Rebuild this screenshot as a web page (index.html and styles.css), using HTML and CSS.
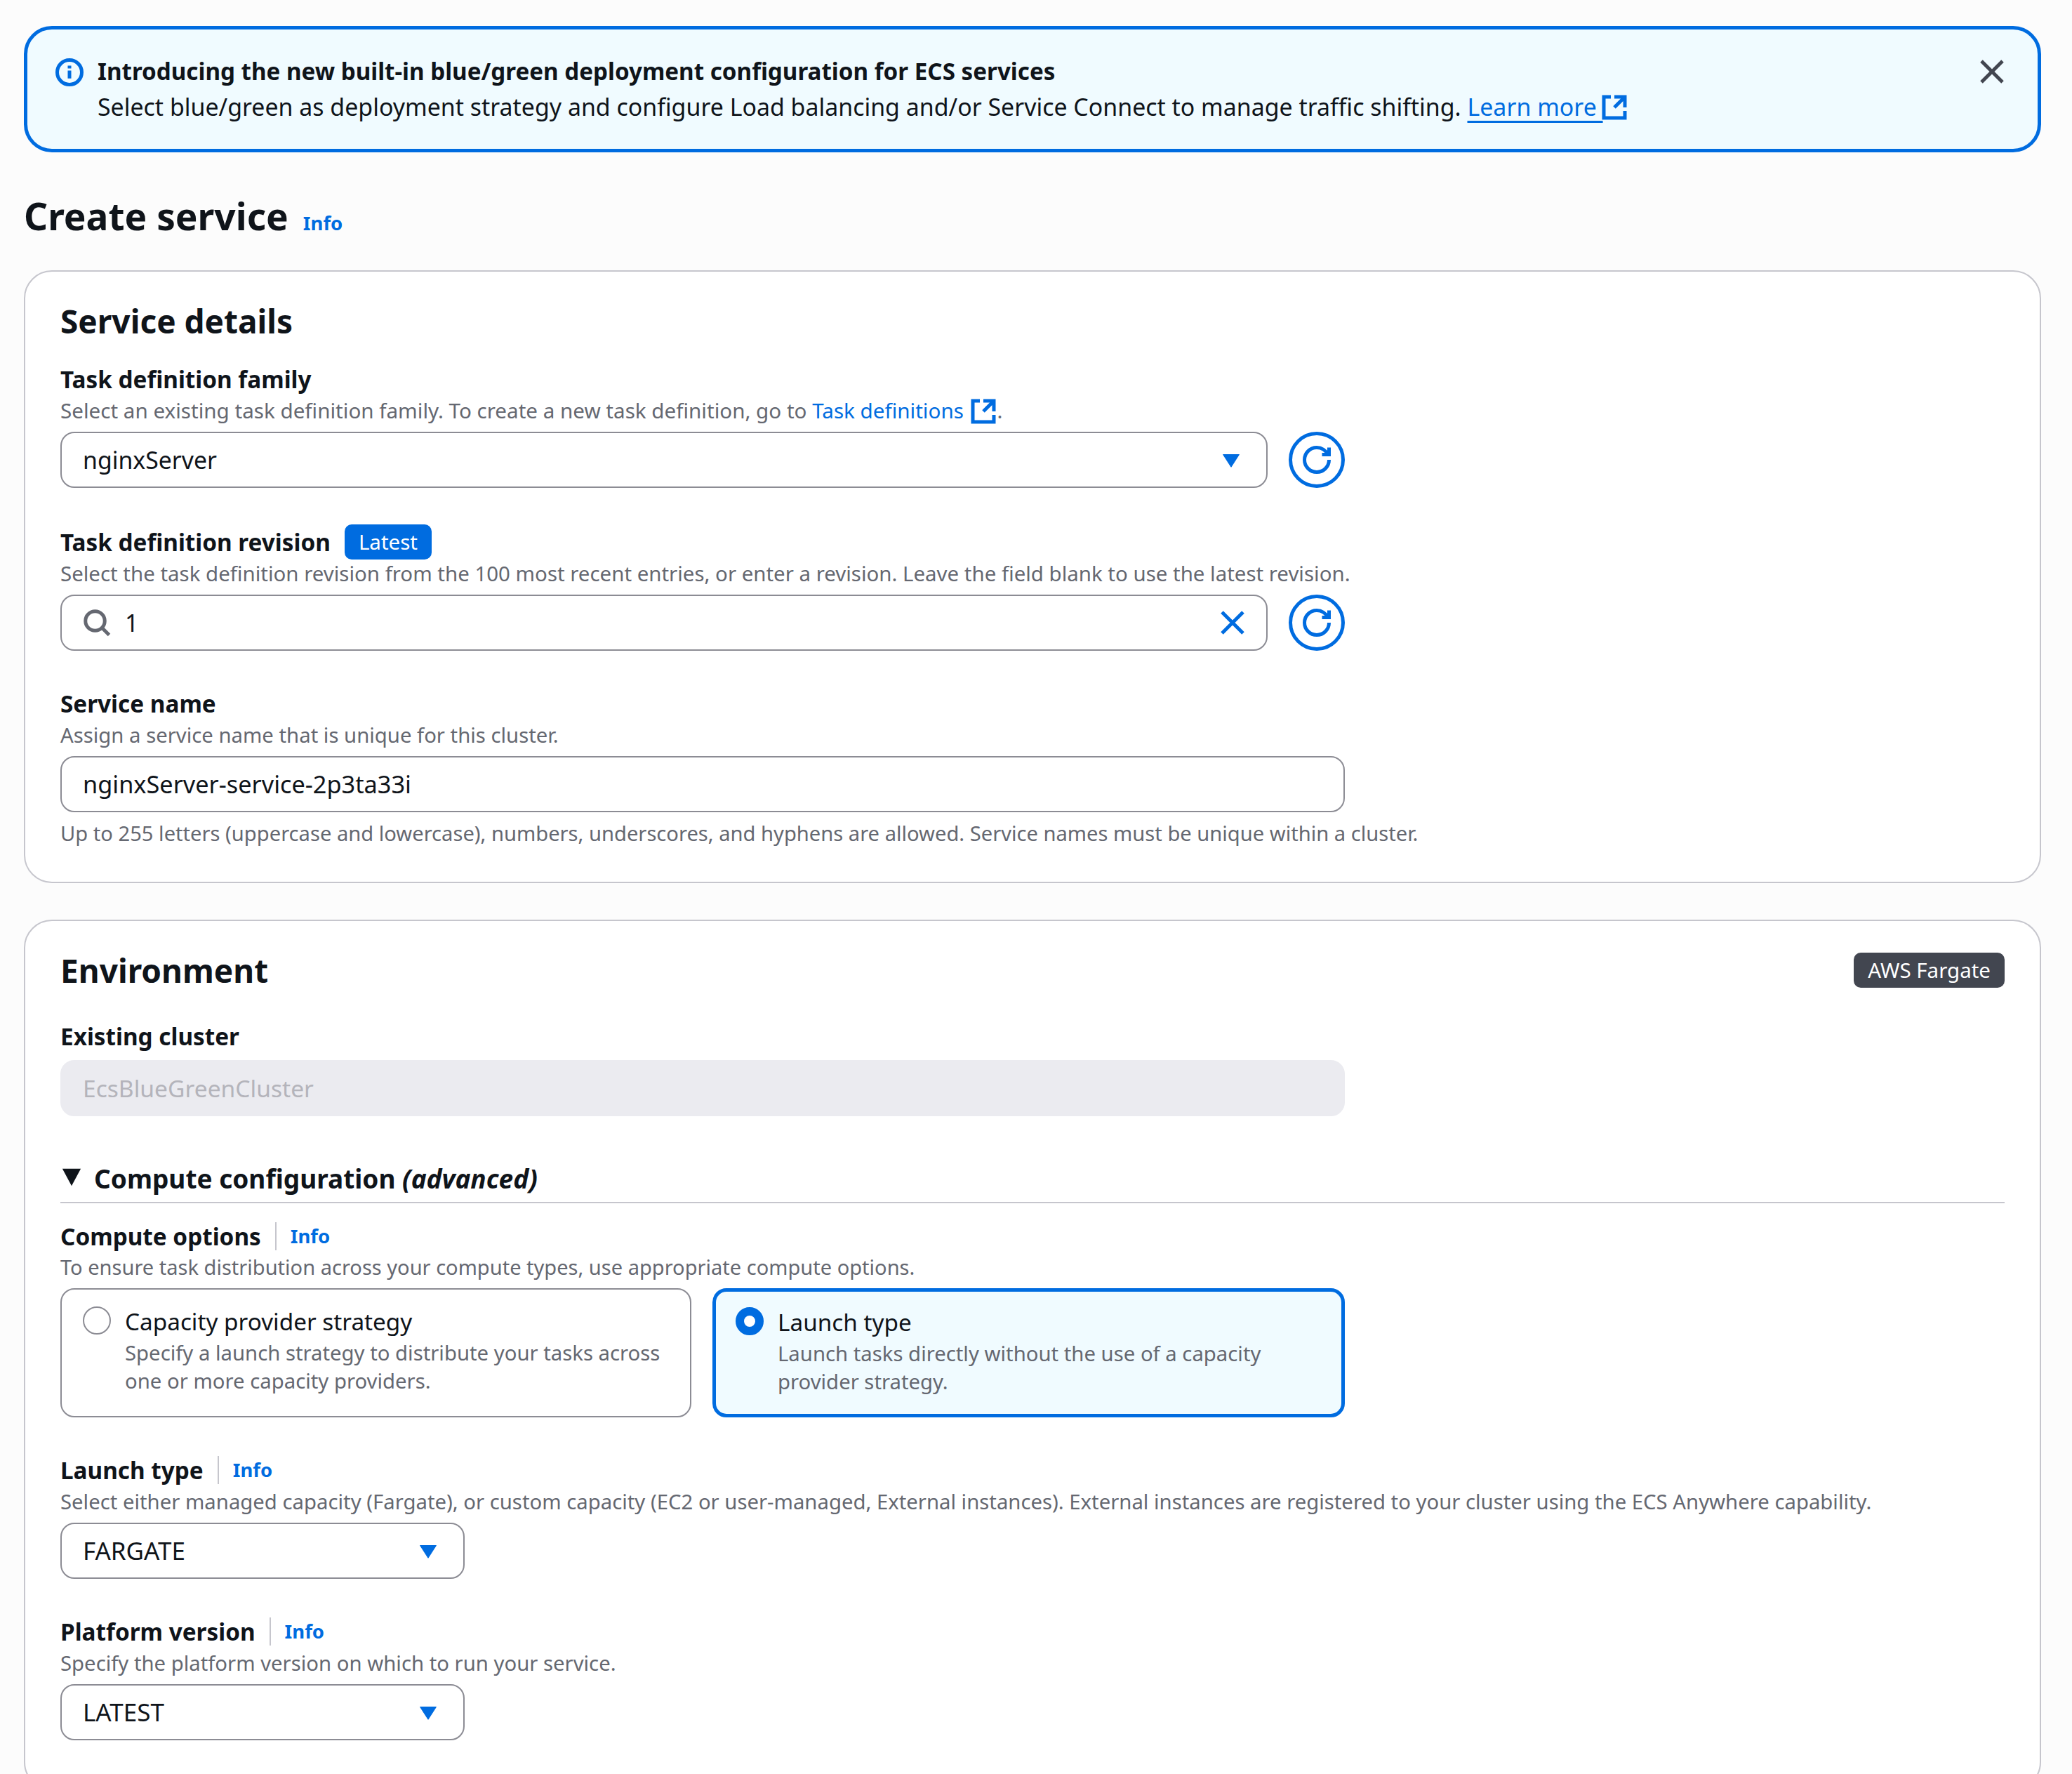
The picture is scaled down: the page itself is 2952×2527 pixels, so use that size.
FILE: index.html
```html
<!DOCTYPE html>
<html lang="en">
<head>
<meta charset="utf-8">
<title>Create service</title>
<link rel="stylesheet" href="styles.css">
</head>
<body>
<main class="page">
  <section class="alert">
    <svg class="icon alert-icon" viewBox="0 0 16 16"><circle cx="8" cy="8" r="7"/><path d="M8 11.5V7M8 4.2v1.6"/></svg>
    <div class="alert-text">
      <div class="alert-title">Introducing the new built-in blue/green deployment configuration for ECS services</div>
      <div>Select blue/green as deployment strategy and configure Load balancing and/or Service Connect to manage traffic shifting. <a class="link underlined">Learn more&nbsp;</a><svg class="icon ext" viewBox="0 0 16 16"><path d="M14 8.01v-6H8M14.02 2 8 8.02M6 2.01H2V14h12v-3.99"/></svg></div>
    </div>
    <svg class="icon alert-close" viewBox="0 0 16 16"><path d="m2 2 12 12M14 2 2 14"/></svg>
  </section>

  <header class="page-head">
    <h1>Create service</h1>
    <a class="link info">Info</a>
  </header>

  <section class="card card-details">
    <h2 class="card-title">Service details</h2>
    <div class="field">
      <div class="label">Task definition family</div>
      <div class="desc desc-family">Select an existing task definition family. To create a new task definition, go to <a class="link">Task definitions</a> <svg class="icon ext" viewBox="0 0 16 16"><path d="M14 8.01v-6H8M14.02 2 8 8.02M6 2.01H2V14h12v-3.99"/></svg>.</div>
      <div class="control-row">
        <div class="input grow">
          <span class="value">nginxServer</span>
          <svg class="caret" viewBox="0 0 16 16"><path d="M3.5 5h9L8 12z"/></svg>
        </div>
        <div class="refresh"><svg class="icon refresh-icon" viewBox="0 0 16 16"><path d="M15 8c0 3.87-3.13 7-7 7s-7-3.13-7-7 3.13-7 7-7c2.79 0 5.2 1.63 6.33 4"/><path d="M15 1v4h-4"/></svg></div>
      </div>
    </div>
    <div class="field field-revision">
      <div class="label-row">
        <span class="label">Task definition revision</span>
        <span class="badge">Latest</span>
      </div>
      <div class="desc desc-wide">Select the task definition revision from the 100 most recent entries, or enter a revision. Leave the field blank to use the latest revision.</div>
      <div class="control-row">
        <div class="input grow">
          <svg class="icon search" viewBox="0 0 16 16"><circle cx="7" cy="7" r="5.5"/><path d="m11 11 4 4"/></svg>
          <span class="value">1</span>
          <svg class="icon clear" viewBox="0 0 16 16"><path d="m2 2 12 12M14 2 2 14"/></svg>
        </div>
        <div class="refresh"><svg class="icon refresh-icon" viewBox="0 0 16 16"><path d="M15 8c0 3.87-3.13 7-7 7s-7-3.13-7-7 3.13-7 7-7c2.79 0 5.2 1.63 6.33 4"/><path d="M15 1v4h-4"/></svg></div>
      </div>
    </div>
    <div class="field field-name">
      <div class="label">Service name</div>
      <div class="desc">Assign a service name that is unique for this cluster.</div>
      <div class="input wide"><span class="value">nginxServer-service-2p3ta33i</span></div>
      <div class="constraint">Up to 255 letters (uppercase and lowercase), numbers, underscores, and hyphens are allowed. Service names must be unique within a cluster.</div>
    </div>
  </section>

  <section class="card card-env">
    <div class="card-head">
      <h2 class="card-title">Environment</h2>
      <span class="badge badge-grey">AWS Fargate</span>
    </div>
    <div class="field field-cluster">
      <div class="label">Existing cluster</div>
      <div class="input wide disabled"><span class="value">EcsBlueGreenCluster</span></div>
    </div>
    <div class="expander">
      <svg class="expander-caret" viewBox="0 0 16 16"><path d="M1 2h14L8 15z"/></svg>
      <h3>Compute configuration <em>(advanced)</em></h3>
    </div>
    <div class="field field-first">
      <div class="label-row">
        <span class="label">Compute options</span>
        <span class="sep"></span>
        <a class="link info-small">Info</a>
      </div>
      <div class="desc desc-narrow">To ensure task distribution across your compute types, use appropriate compute options.</div>
      <div class="tiles">
        <div class="tile">
          <span class="radio"></span>
          <div>
            <div class="tile-title">Capacity provider strategy</div>
            <div class="tile-desc">Specify a launch strategy to distribute your tasks across one or more capacity providers.</div>
          </div>
        </div>
        <div class="tile tile-on">
          <span class="radio radio-on"></span>
          <div>
            <div class="tile-title">Launch type</div>
            <div class="tile-desc">Launch tasks directly without the use of a capacity provider strategy.</div>
          </div>
        </div>
      </div>
    </div>
    <div class="field">
      <div class="label-row">
        <span class="label">Launch type</span>
        <span class="sep"></span>
        <a class="link info-small">Info</a>
      </div>
      <div class="desc">Select either managed capacity (Fargate), or custom capacity (EC2 or user-managed, External instances). External instances are registered to your cluster using the ECS Anywhere capability.</div>
      <div class="input narrow">
        <span class="value">FARGATE</span>
        <svg class="caret" viewBox="0 0 16 16"><path d="M3.5 5h9L8 12z"/></svg>
      </div>
    </div>
    <div class="field">
      <div class="label-row">
        <span class="label">Platform version</span>
        <span class="sep"></span>
        <a class="link info-small">Info</a>
      </div>
      <div class="desc">Specify the platform version on which to run your service.</div>
      <div class="input narrow">
        <span class="value">LATEST</span>
        <svg class="caret" viewBox="0 0 16 16"><path d="M3.5 5h9L8 12z"/></svg>
      </div>
    </div>
  </section>
</main>
</body>
</html>
```
FILE: styles.css
```css
* { box-sizing: border-box; }
html, body { margin: 0; padding: 0; height: 2527px; overflow: hidden; }
body {
  background: #fcfcfc;
  color: #0f141a;
  font-family: "Noto Sans", "Open Sans", sans-serif;
  font-size: 33.3px;
  line-height: 50px;
}
.page { padding: 37px 44px 0 34px; }
a { text-decoration: none; }
.link { color: #006ce0; }
.underlined { text-decoration: underline; text-decoration-thickness: 3px; text-underline-offset: 7px; }
.icon { fill: none; stroke: #006ce0; stroke-width: 2; flex: none; }
.ext { width: 40px; height: 40px; margin: -6px 0 -6px -4px; vertical-align: -2px; }

.alert {
  display: flex;
  align-items: flex-start;
  height: 180px;
  padding: 35px 45px 0 40px;
  background: #f0fbff;
  border: 5px solid #006ce0;
  border-radius: 40px;
}
.alert-icon { width: 40px; height: 40px; margin-top: 6px; margin-right: 20px; }
.alert-text { flex: 1; font-size: 33.9px; }
.alert-title { font-size: 33.2px; font-weight: 700; }
.alert-close { width: 40px; height: 40px; stroke: #424650; margin-top: 5px; }

.page-head { display: flex; align-items: baseline; gap: 21px; margin-top: 56px; height: 70px; line-height: 70px; }
h1 { margin: 0; font-size: 53.2px; font-weight: 700; }
.info { font-size: 27.5px; font-weight: 700; }

.card {
  margin-top: 42px;
  padding: 40px 50px 48px;
  background: #fff;
  border: 2.5px solid #c6c6cd;
  border-radius: 40px;
  height: 873px;
}
.card-env { margin-top: 52px; height: 1240px; }
.card-title { margin: 0; font-size: 46px; font-weight: 700; line-height: 60px; }
.card-head { display: flex; justify-content: space-between; align-items: center; }

.field { margin-top: 28px; }
.field + .field { margin-top: 50px; }
.card-details .field-revision { margin-top: 52px; }
.card-details .field-name { margin-top: 50px; }
.field-cluster { margin-top: 39px; }
.label { font-weight: 700; }
.label-row { display: flex; align-items: center; height: 50px; }
.desc { font-size: 29.3px; line-height: 40px; color: #656871; }
.desc-family { font-size: 29.6px; }
.desc-wide { font-size: 29.45px; }
.desc-narrow { font-size: 29.05px; }
.desc .ext { margin-left: 0; vertical-align: -4px; }
.constraint { margin-top: 10px; font-size: 29.15px; line-height: 40px; color: #656871; }
.control-row { display: flex; gap: 30px; width: 1830px; margin-top: 10px; }
.grow { flex: 1; }
.input {
  display: flex;
  align-items: center;
  height: 80px;
  margin-top: 10px;
  padding: 0 30px;
  background: #fff;
  border: 2.5px solid #8c8c94;
  border-radius: 20px;
  font-size: 34.3px;
}
.control-row .input { margin-top: 0; font-size: 33.8px; }
.value { flex: 1; }
.wide { width: 1830px; }
.narrow { width: 576px; font-size: 35px; }
.input.disabled { background: #ebebf0; border-color: #ebebf0; color: #b4b4bb; font-size: 33.6px; margin-top: 9px; }
.caret { width: 40px; height: 40px; fill: #006ce0; stroke: #006ce0; stroke-width: 0.5; stroke-linejoin: round; flex: none; }
.search { width: 40px; height: 40px; stroke: #656871; margin-right: 20px; }
.clear { width: 40px; height: 40px; margin-right: -2px; }
.refresh {
  display: flex;
  align-items: center;
  justify-content: center;
  width: 80px;
  height: 80px;
  border: 5px solid #006ce0;
  border-radius: 50%;
  flex: none;
}
.refresh-icon { width: 40px; height: 40px; }
.badge {
  display: inline-flex;
  align-items: center;
  height: 50px;
  margin-left: 20px;
  padding: 0 20px;
  font-size: 29.5px;
  color: #fff;
  background: #006ce0;
  border-radius: 10px;
}
.badge-grey { background: #424650; margin-left: 0; }

.expander {
  display: flex;
  align-items: center;
  gap: 17px;
  height: 68px;
  margin-top: 56px;
  border-bottom: 2.5px solid #c6c6cd;
}
.expander-caret { width: 30px; height: 30px; fill: #0f141a; margin-left: 1px; margin-top: -6px; }
.expander h3 { margin: 0; font-size: 37px; font-weight: 700; line-height: 50px; }
.expander em { font-weight: 700; }
.field-first { margin-top: 22px; }
.field-first .desc { margin-top: -1px; }
.sep { width: 2px; height: 40px; margin: 0 20px; background: #c6c6cd; }
.info-small { font-size: 27.5px; font-weight: 700; }

.tiles { display: flex; gap: 30px; margin-top: 10px; width: 1830px; }
.tile {
  display: flex;
  flex: 1;
  gap: 20px;
  height: 184px;
  padding: 20px 30px;
  border: 2.5px solid #8c8c94;
  border-radius: 20px;
}
.tile-on { background: #f0fbff; border: 5px solid #006ce0; padding: 18px 28px; }
.radio {
  width: 40px;
  height: 40px;
  margin-top: 4px;
  background: #fff;
  border: 2.5px solid #8c8c94;
  border-radius: 50%;
  flex: none;
}
.radio-on { border: 12px solid #006ce0; }
.tile-title { line-height: 50px; }
.tile-desc { font-size: 29.3px; line-height: 40px; color: #656871; }
```
